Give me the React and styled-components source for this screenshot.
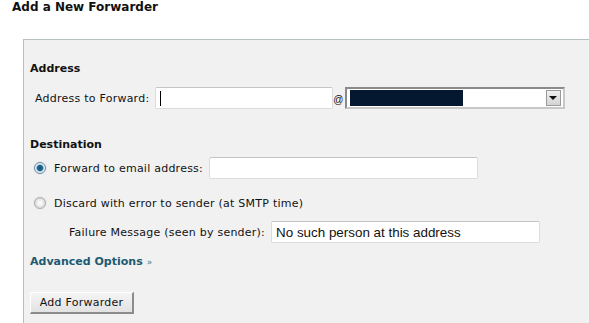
import React from "react";
import styled, { createGlobalStyle } from "styled-components";

const GlobalStyle = createGlobalStyle`
  body {
    margin: 0;
    background: #fff;
    overflow: hidden;
    font-family: "DejaVu Sans", Verdana, sans-serif;
    font-size: 11px;
    letter-spacing: 0.24px;
    color: #111;
  }
`;

const Page = styled.div`
  width: 589px;
  height: 323px;
  overflow: hidden;
`;

const PageTitle = styled.h1`
  margin: 0;
  padding: 0 0 0 12px;
  font-size: 12px;
  font-weight: bold;
  letter-spacing: 0;
  line-height: 14px;
  color: #111;
`;

const Panel = styled.div`
  margin: 25px 0 0 23px;
  width: 620px;
  height: 320px;
  box-sizing: border-box;
  background: #f1f1f1;
  border: 1px solid #b7c0c0;
  padding: 22px 0 0 6px;
  display: flex;
  flex-direction: column;
  align-items: flex-start;
`;

const Heading = styled.div`
  font-weight: bold;
  letter-spacing: 0;
  line-height: 14px;
  margin-top: ${(p) => p.$top || 0}px;
`;

const Row = styled.div`
  display: flex;
  align-items: center;
  height: 22px;
  margin-top: ${(p) => p.$top || 0}px;
  padding-left: ${(p) => p.$indent || 0}px;
`;

const Label = styled.span`
  margin-right: 6px;
  white-space: nowrap;
`;

const TextBox = styled.div`
  width: ${(p) => p.$w}px;
  height: 22px;
  box-sizing: border-box;
  background: #fff;
  border: 1px solid #dcdcdc;
  border-top-color: #c4c4c4;
  border-radius: 2px;
  display: flex;
  align-items: center;
  padding-left: 4px;
  font-family: "Liberation Sans", Arial, sans-serif;
  font-size: 13.4px;
  letter-spacing: 0;
  color: #111;
`;

const Caret = styled.span`
  display: inline-block;
  width: 1px;
  height: 15px;
  background: #000;
`;

const At = styled.span`
  font-family: "Liberation Sans", Arial, sans-serif;
  font-size: 10px;
  letter-spacing: 0;
  margin: 2px 1px 0 0;
`;

const Select = styled.div`
  width: 220px;
  height: 22px;
  box-sizing: border-box;
  background: #fff;
  border: 2px solid #8a8a8a;
  border-right-color: #c8c8c8;
  border-bottom-color: #c8c8c8;
  display: flex;
  align-items: center;
  padding: 0 2px;
`;

const Selected = styled.div`
  width: 113px;
  height: 16px;
  background: #041830;
  margin-left: 1px;
`;

const DropButton = styled.div`
  margin-left: auto;
  width: 15px;
  height: 16px;
  box-sizing: border-box;
  background: linear-gradient(#f0f0f0, #d4d4d4);
  border: 1px solid #9a9a9a;
  display: flex;
  align-items: center;
  justify-content: center;
`;

const Arrow = styled.span`
  width: 0;
  height: 0;
  border-left: 4px solid transparent;
  border-right: 4px solid transparent;
  border-top: 4px solid #111;
`;

const Radio = styled.span`
  width: 12px;
  height: 12px;
  border-radius: 50%;
  box-sizing: border-box;
  margin: 0 8px 0 4px;
  border: 1px solid ${(p) => (p.$on ? "#6f8ea6" : "#b0b0b0")};
  background: ${(p) =>
    p.$on
      ? "radial-gradient(circle, #1b5f8c 0 2.5px, #4d8fb5 3px, #e6eef3 4px)"
      : "radial-gradient(circle, #f6f6f6 0 2px, #d8d8d8 5px)"};
  box-shadow: 0 0 1px rgba(0, 0, 0, 0.25);
`;

const AdvancedLink = styled.a`
  font-weight: bold;
  letter-spacing: 0;
  color: #1c5a72;
  text-decoration: none;
  line-height: 14px;
  margin-top: 12px;
  & span {
    font-weight: normal;
    font-size: 9px;
    color: #4a7b90;
    margin-left: 4px;
  }
`;

const Button = styled.button`
  margin-top: 23px;
  width: 104px;
  height: 22px;
  font-family: "DejaVu Sans", Verdana, sans-serif;
  font-size: 11px;
  letter-spacing: 0.24px;
  color: #111;
  background: linear-gradient(#f4f4f4, #e2e2e2);
  border: 1px solid #fff;
  border-right: 2px solid #8c8c8c;
  border-bottom: 2px solid #8c8c8c;
  padding: 0;
`;

export default function App() {
  return (
    <Page>
      <GlobalStyle />
      <PageTitle>Add a New Forwarder</PageTitle>
      <Panel>
        <Heading>Address</Heading>
        <Row $top={11} $indent={5}>
          <Label>Address to Forward:</Label>
          <TextBox $w={178}>
            <Caret />
          </TextBox>
          <At>@</At>
          <Select>
            <Selected />
            <DropButton>
              <Arrow />
            </DropButton>
          </Select>
        </Row>

        <Heading $top={29}>Destination</Heading>
        <Row $top={5}>
          <Radio $on />
          <Label>Forward to email address:</Label>
          <TextBox $w={269} />
        </Row>
        <Row $top={13}>
          <Radio />
          <Label>Discard with error to sender (at SMTP time)</Label>
        </Row>
        <Row $top={7} $indent={39}>
          <Label>Failure Message (seen by sender):</Label>
          <TextBox $w={269}>No such person at this address</TextBox>
        </Row>

        <AdvancedLink href="#">
          Advanced Options<span>»</span>
        </AdvancedLink>
        <Button>Add Forwarder</Button>
      </Panel>
    </Page>
  );
}
